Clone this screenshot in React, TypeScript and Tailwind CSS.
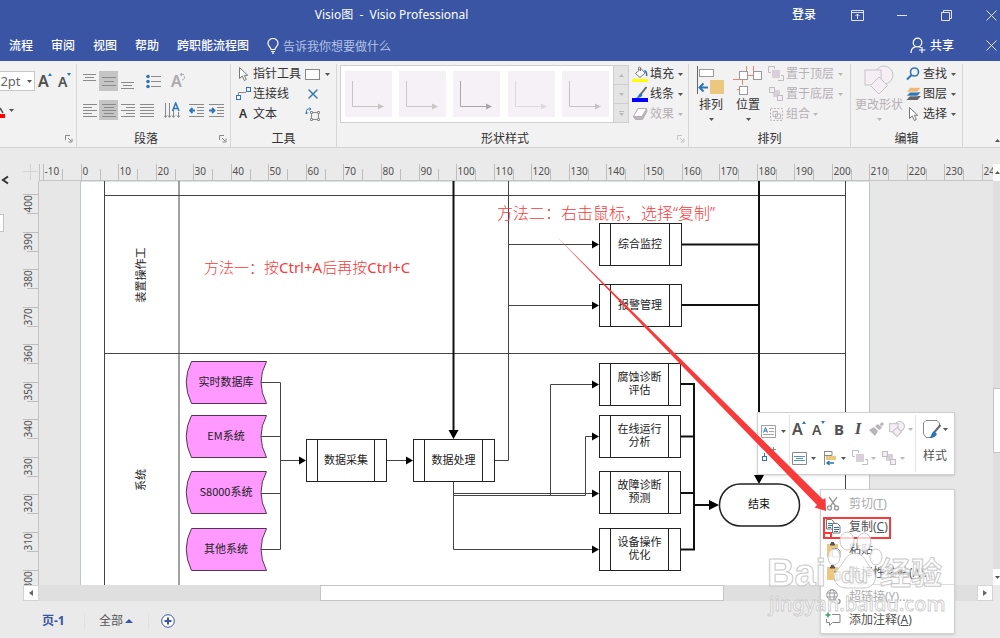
import type { ReactNode } from "react";
import { LuX } from "react-icons/lu";

const GREY = "#8a8a8a";
const BLUE = "#2e75b6";

/* ---------- small shared pieces ---------- */

function Caret({ light = false, up = false }: { light?: boolean; up?: boolean }) {
  return (
    <svg width="5" height="3" viewBox="0 0 5 3" className="shrink-0" fill={light ? "#b9b9b9" : "#555"}>
      <path d={up ? "M0 3h5L2.500 0z" : "M0 0h5L2.500 3z"} />
    </svg>
  );
}

// Each row is [x, width]
function Lines({ rows, gap = 4, color = GREY }: { rows: number[][]; gap?: number; color?: string }) {
  const height = (rows.length - 1) * gap + 1;
  return (
    <svg width="14" height={height} viewBox={`0 0 14 ${height}`} fill={color} shapeRendering="crispEdges">
      {rows.map(([x, w], i) => (
        <rect key={i} x={x} y={i * gap} width={w} height="1" />
      ))}
    </svg>
  );
}

function FontSize({ grow }: { grow?: boolean }) {
  return (
    <svg width="15" height="18" viewBox="0 0 15 18" className="overflow-visible">
      <text x="0" y="15" fontSize={grow ? 16 : 14} className="font-[Noto_Sans] font-semibold" fill="#505050">
        A
      </text>
      <path d={grow ? "M10 4h4l-2-3z" : "M9 1h4l-2 3z"} fill={BLUE} />
    </svg>
  );
}

function Pointer() {
  return (
    <svg width="14" height="16" viewBox="0 0 14 16" fill="#fff" stroke="#777">
      <path d="M3.500 1.500v11l2.800-2.500 2 4.500 2-1-2-4.200h3.400z" />
    </svg>
  );
}

function Front({ back = false }: { back?: boolean }) {
  const line = "#c4bcc4";
  return back ? (
    <svg width="16" height="16" viewBox="0 0 16 16" fill="#f3eef3" stroke={line}>
      <rect x="5" y="4" width="7" height="7" fill="#d9d0d9" stroke="none" />
      <rect x="1.500" y="1.500" width="5" height="5" />
      <rect x="9.500" y="9.500" width="5" height="5" />
    </svg>
  ) : (
    <svg width="16" height="16" viewBox="0 0 16 16" fill="none" stroke={line}>
      <path d="M6.500 3V.500h-6v6H3M10 14.500h5.500v-5H13" />
      <rect x="4" y="4" width="8" height="8" fill="#d9d0d9" stroke="none" />
    </svg>
  );
}

function Shapes({ size }: { size: number }) {
  return (
    <svg width={size} height={size} viewBox="0 0 30 30" fill="#f5eff5" stroke="#c8c2c8" strokeWidth={size > 20 ? 1 : 2}>
      <circle cx="20" cy="10" r="9" />
      <rect x="1" y="5" width="16" height="15" />
      <path d="M15 12l8.500 8.500-8.500 8.500-8.500-8.500z" />
    </svg>
  );
}

function Launcher({ light }: { light?: boolean }) {
  return (
    <button aria-label="更多选项" className="flex w-[15px] justify-center">
      <svg width="8" height="8" viewBox="0 0 8 8" fill="none" stroke={light ? "#c2c2c2" : "#888"}>
        <path d="M.500 5V.500H5M3 3l3 3M7 3.500V7H3.500" />
      </svg>
    </button>
  );
}

function Group({
  label,
  launcher,
  light,
  className,
  children,
}: {
  label?: string;
  launcher?: boolean;
  light?: boolean;
  className: string;
  children: ReactNode;
}) {
  return (
    <section className={`mt-[3px] flex shrink-0 flex-col border-r border-[#d6d6d6] ${className}`}>
      <div className="flex h-[66px]">{children}</div>
      <div className="flex h-[17px] items-center">
        <span className="flex-1 text-center">{label}</span>
        {launcher && <Launcher light={light} />}
      </div>
    </section>
  );
}

function Tool({ icon, label, off, caret = true, wide }: { icon: ReactNode; label: string; off?: boolean; caret?: boolean; wide?: boolean }) {
  return (
    <button className={`flex h-5 items-center gap-[2px] whitespace-nowrap ${off ? "text-[#b5b0b5]" : ""}`}>
      <span className="flex w-4 justify-center">{icon}</span>
      <span>{label}</span>
      {caret && (
        <span className={wide ? "ml-[2px]" : "ml-[1px]"}>
          <Caret light={off} />
        </span>
      )}
    </button>
  );
}

function BigTool({ icon, label, off, className }: { icon: ReactNode; label: string; off?: boolean; className: string }) {
  return (
    <button className={`flex flex-col items-center pt-[1px] ${off ? "text-[#b5b0b5]" : ""} ${className}`}>
      {icon}
      <span className="h-5 leading-5">{label}</span>
      <span className="mt-[3px]">
        <Caret light={off} />
      </span>
    </button>
  );
}

const Bar = () => <span className="h-[18px] w-px bg-[#d6d6d6]" />;

/* ---------- title bar and tabs ---------- */

function Header() {
  return (
    <header className="bg-[#3955a3] text-white">
      <div className="flex h-[30px] items-center">
        <h1 className="flex-1 text-center whitespace-pre">Visio图  -  Visio Professional</h1>
        <div className="flex w-[217px] items-center pl-[9px]">
          <button className="w-[43px] text-left font-medium">登录</button>
          <button aria-label="功能区显示选项" className="flex w-[45px] justify-center">
            <svg width="13" height="11" viewBox="0 0 13 11" fill="none" stroke="#fff" strokeOpacity=".85">
              <path d="M.500.500h12v10H.500zM.500 2.500h12M6.500 9V4M4.500 6l2-2 2 2" />
            </svg>
          </button>
          <button aria-label="最小化" className="flex w-[44px] justify-center">
            <svg width="10" height="10" viewBox="0 0 10 10" stroke="#fff" strokeOpacity=".85">
              <path d="M0 5.500h10" />
            </svg>
          </button>
          <button aria-label="还原" className="flex w-[45px] justify-center">
            <svg width="11" height="11" viewBox="0 0 11 11" fill="none" stroke="#fff" strokeOpacity=".85">
              <path d="M.500 2.500h8v8h-8zM2.500 2.500v-2h8v8h-2" />
            </svg>
          </button>
          <button aria-label="关闭" className="flex flex-1 justify-end pr-[3px]">
            <svg width="11" height="11" viewBox="0 0 11 11" stroke="#fff" strokeOpacity=".85">
              <path d="M.500.500l10 10M10.500.500l-10 10" />
            </svg>
          </button>
        </div>
      </div>
      <nav className="flex h-[31px] items-center gap-[18px] pl-[9px]">
        {["流程", "审阅", "视图", "帮助", "跨职能流程图"].map((tab) => (
          <button key={tab} className="shrink-0 font-medium">
            {tab}
          </button>
        ))}
        <label className="flex flex-1 items-center gap-1">
          <svg width="12" height="16" viewBox="0 0 12 16" fill="none" stroke="#fff" strokeWidth="1.200">
            <path d="M4 11.500C4 9 1 8.500 1 5.300a5 4.800 0 0 1 10 0C11 8.500 8 9 8 11.500zM4 13.500h4M5 15.200h2" />
          </svg>
          <input
            aria-label="告诉我你想要做什么"
            placeholder="告诉我你想要做什么"
            className="w-36 bg-transparent pt-[2px] outline-none placeholder:text-[#b4c1e4]"
          />
        </label>
        <button className="flex items-center gap-1 font-medium">
          <svg width="16" height="17" viewBox="0 0 16 17" fill="none" stroke="#fff" strokeWidth="1.200">
            <circle cx="7.500" cy="5.500" r="4.300" />
            <path d="M1 16c0-3.500 2-5.800 5-6.300M8.500 9.700c1 .2 1.800.600 2.300 1M12 10v6M9 13h6.500" />
          </svg>
          共享
        </button>
        <button aria-label="关闭文档" className="ml-[14px] w-[14px] shrink-0">
          <svg width="11" height="11" viewBox="0 0 11 11" stroke="#fff" strokeOpacity=".85">
            <path d="M.500.500l10 10M10.500.500l-10 10" />
          </svg>
        </button>
      </nav>
    </header>
  );
}

/* ---------- ribbon ---------- */

function FontGroup() {
  return (
    <Group launcher className="w-[77px]">
      <div className="flex flex-col gap-[9px] pt-[7px]">
        <div className="flex h-5 items-center">
          <label className="relative -ml-5 flex items-center">
            <select aria-label="字号" className="h-5 w-[55px] appearance-none border border-[#c8c8c8] bg-white pl-3 text-[13px] text-[#666]">
              <option>12pt</option>
            </select>
            <span className="pointer-events-none absolute right-[3px]">
              <Caret />
            </span>
          </label>
          <button aria-label="增大字号" className="ml-[3px]">
            <FontSize grow />
          </button>
          <button aria-label="减小字号" className="ml-[5px]">
            <FontSize />
          </button>
        </div>
        <button aria-label="字体颜色" className="flex h-5 items-center gap-1">
          <svg width="5" height="16" viewBox="0 0 5 16">
            <path d="M0 6l3 5" stroke="#555" strokeWidth="1.500" />
            <path d="M0 12h5v4H0z" fill="#f00" />
          </svg>
          <Caret />
        </button>
      </div>
    </Group>
  );
}

function ParagraphGroup() {
  const cell = "flex h-5 w-[19px] shrink-0 items-center justify-center";
  return (
    <Group label="段落" launcher className="w-[154px]">
      <div className="flex flex-col gap-[9px] pt-[7px] pl-[3px]">
        <div className="flex h-5 items-center">
          <button aria-label="顶端对齐" className={`${cell} pb-2`}>
            <Lines rows={[[0, 13], [2, 9], [0, 13]]} gap={3} />
          </button>
          <button aria-label="中部对齐" aria-pressed="true" className={`${cell} bg-[#c5c5c5]`}>
            <Lines rows={[[0, 14], [2, 10], [0, 14]]} />
          </button>
          <button aria-label="底端对齐" className={`${cell} pt-2`}>
            <Lines rows={[[0, 13], [2, 9], [0, 13]]} gap={3} />
          </button>
          <span className="ml-1">
            <Bar />
          </span>
          <button aria-label="项目符号" className="ml-[5px]">
            <svg width="16" height="15" viewBox="0 0 16 15" fill={BLUE} stroke={GREY}>
              <path d="M5 2.500h10M5 7.500h10M5 12.500h10" />
              <g stroke="none">
                <circle cx="2" cy="2.500" r="1.800" />
                <circle cx="2" cy="7.500" r="1.800" />
                <circle cx="2" cy="12.500" r="1.800" />
              </g>
            </svg>
          </button>
          <span className="ml-1">
            <Bar />
          </span>
          <button aria-label="旋转文本" className="ml-[5px]">
            <svg width="16" height="16" viewBox="0 0 16 16" className="overflow-visible">
              <text x="0" y="14" fontSize="16" fill="#aaa" className="font-[Noto_Sans] font-semibold">
                A
              </text>
              <path d="M9 1.500h4M9 1.500l2-1.500M9 1.500l2 1.500M13 3a2.500 2.500 0 0 1-2 4" fill="none" stroke="#aaa" />
            </svg>
          </button>
        </div>
        <div className="flex h-5 items-center">
          <button aria-label="左对齐" className={cell}>
            <Lines rows={[[0, 14], [0, 9], [0, 14], [0, 9], [0, 14]]} gap={3} />
          </button>
          <button aria-label="居中" aria-pressed="true" className={`${cell} bg-[#c5c5c5]`}>
            <Lines rows={[[0, 14], [2, 10], [0, 14], [2, 10], [0, 14]]} gap={3} />
          </button>
          <button aria-label="右对齐" className={cell}>
            <Lines rows={[[0, 14], [5, 9], [0, 14], [5, 9], [0, 14]]} gap={3} />
          </button>
          <button aria-label="两端对齐" className={cell}>
            <Lines rows={[[0, 14], [0, 14], [0, 14], [0, 14], [0, 14]]} gap={3} />
          </button>
          <span className="ml-1">
            <Bar />
          </span>
          <button aria-label="文字方向" className="ml-1">
            <svg width="17" height="17" viewBox="0 0 17 17" fill="none" stroke={GREY}>
              <path d="M1.500 1v14M5.500 1v14M9.500 8v7M14.500 10v5M0 13.500l1.500 2 1.500-2M4 13.500l1.500 2 1.500-2M8 13.500l1.500 2 1.500-2M13 13.500l1.500 2 1.500-2" />
              <path d="M8.500 9l3.200-8 3.300 8M9.800 6.500h4" stroke={BLUE} strokeWidth="1.500" />
            </svg>
          </button>
          <span className="ml-[3px]">
            <Bar />
          </span>
          {["减少缩进量", "增加缩进量"].map((name, i) => (
            <button key={name} aria-label={name} className="ml-[5px]">
              <svg width="15" height="15" viewBox="0 0 15 15" fill="none" stroke={GREY}>
                <path d="M0 1.500h15M8 4.500h7M8 7.500h7M8 10.500h7M0 13.500h15" />
                <path d={i === 0 ? "M6 7.500H1M3.500 5L1 7.500 3.500 10" : "M0 7.500h5M3 5l2.500 2.500L3 10"} stroke={BLUE} strokeWidth="1.800" />
              </svg>
            </button>
          ))}
        </div>
      </div>
    </Group>
  );
}

function ToolsGroup() {
  return (
    <Group label="工具" className="w-[106px]">
      <div className="flex w-[74px] flex-col pl-1">
        <Tool icon={<Pointer />} label="指针工具" caret={false} />
        <Tool
          icon={
            <svg width="15" height="14" viewBox="0 0 15 14" fill="none" stroke={BLUE}>
              <path d="M2.500 8V5.500h7.500" stroke={GREY} />
              <rect x=".5" y="8.500" width="4" height="4" />
              <rect x="10.500" y=".5" width="4" height="4" />
            </svg>
          }
          label="连接线"
          caret={false}
        />
        <Tool icon={<span className="font-[Noto_Sans] font-semibold">A</span>} label="文本" caret={false} />
      </div>
      <div className="flex flex-col items-start">
        <button aria-label="矩形" className="flex h-5 items-center gap-[5px]">
          <span className="h-[11px] w-[15px] border border-[#888] bg-white" />
          <Caret />
        </button>
        <button aria-label="连接点" className="flex h-5 w-4 items-center justify-center">
          <LuX size={16} color={BLUE} />
        </button>
        <button aria-label="文本块" className="flex h-5 items-center">
          <svg width="16" height="15" viewBox="0 0 16 15" fill="none" stroke={GREY}>
            <path d="M6.500 5.500h7v7h-7z" />
            <path d="M5.500 4.500h2v2h-2zM12.500 4.500h2v2h-2zM5.500 11.500h2v2h-2zM12.500 11.500h2v2h-2z" fill="#fff" />
            <path d="M1.500 7V3.500A2 2 0 0 1 3 2h3M0 5.500L1.500 7 3 5.500M4.500.500L6 2 4.500 3.500" stroke={BLUE} />
          </svg>
        </button>
      </div>
    </Group>
  );
}

function StylesGroup() {
  const strokes = ["#c6c2c6", "#cac6ca", "#a9a5a9", "#dcd8dc", "#c6c2c6"];
  return (
    <Group label="形状样式" launcher light className="w-[352px]">
      <div className="mt-[1px] ml-[3px] flex h-[58px] w-[289px] border border-[#cfcfcf] bg-white">
        <div className="flex flex-1 items-center justify-around">
          {strokes.map((stroke, i) => (
            <button key={i} aria-label={`样式 ${i + 1}`} className="bg-[#f6f1f7]">
              <svg width="47" height="46" viewBox="0 0 47 46" fill="none" stroke={stroke}>
                <path d="M7.500 10v25.500H34" />
                <path d="M33 32.500v6l6-3z" fill={stroke} stroke="none" />
              </svg>
            </button>
          ))}
        </div>
        <div className="flex w-[15px] flex-col divide-y divide-[#cfcfcf] border-l border-[#cfcfcf] bg-[#e4e4e4]">
          <button aria-label="上一行" className="flex flex-1 items-center justify-center">
            <Caret light up />
          </button>
          <button aria-label="下一行" className="flex flex-1 items-center justify-center">
            <Caret light />
          </button>
          <button aria-label="其他" className="flex flex-1 flex-col items-center justify-center gap-[1px]">
            <span className="h-px w-[5px] bg-[#b9b9b9]" />
            <Caret light />
          </button>
        </div>
      </div>
      <div className="ml-[3px] flex flex-col">
        <Tool
          wide
          icon={
            <svg width="16" height="16" viewBox="0 0 16 16" fill="#fff" stroke="#777">
              <path d="M3.500 7.500L9 2.500l4 4.500-5 4.500z" />
              <path d="M8.500 5V1.500a1.500 1.500 0 0 0-2 0V4" fill="none" />
              <path d="M12.500 4.500c2 1 2.500 3 2 5.500" fill="none" stroke={BLUE} strokeWidth="1.500" />
              <path d="M0 13h16v3H0z" fill="#ff0" stroke="none" />
            </svg>
          }
          label="填充"
        />
        <Tool
          wide
          icon={
            <svg width="16" height="16" viewBox="0 0 16 16">
              <path d="M14.500 1L8.500 8.500" stroke="#666" strokeWidth="2" />
              <path d="M8.500 7l2 2c-1 2.500-3 3-6.500 2.500C6.500 11 6.500 8 8.500 7z" fill={BLUE} />
              <path d="M0 12h16v4H0z" fill="#00f" />
            </svg>
          }
          label="线条"
        />
        <Tool
          wide
          off
          icon={
            <svg width="16" height="14" viewBox="0 0 16 14" stroke="#b5b0b5">
              <path d="M1.500 10L6 1.500h8.500L15 4l-4.500 8.500h-7z" fill="#bdb8bd" />
              <path d="M6 1.500h8.500l-4.500 8H1.500z" fill="#fff" />
            </svg>
          }
          label="效果"
        />
      </div>
    </Group>
  );
}

function ArrangeGroup() {
  return (
    <Group label="排列" className="w-[162px]">
      <BigTool
        className="ml-2 w-7"
        label="排列"
        icon={
          <svg width="28" height="30" viewBox="0 0 28 30" fill="none">
            <path d="M.500 1v28" stroke="#666" />
            <rect x="2.500" y="4.500" width="14" height="7" fill="#fff" stroke="#999" />
            <rect x="13" y="15" width="14" height="14" fill="#ecc77f" />
            <path d="M11 22.500H3M6.500 18.500l-4 4 4 4" stroke={BLUE} strokeWidth="2" />
          </svg>
        }
      />
      <BigTool
        className="ml-2 w-[30px]"
        label="位置"
        icon={
          <svg width="30" height="30" viewBox="0 0 30 30" fill="#fff" stroke="#999">
            <path d="M13.500 1v5M20.500 1v10M15 10.500h6M0 14.500h9.500M9.500 15v5M4 24.500h2" stroke="#e8836f" />
            <rect x="6.500" y="6.500" width="8" height="8" />
            <rect x="20.500" y="6.500" width="8" height="8" />
            <rect x="6.500" y="21.500" width="8" height="8" />
          </svg>
        }
      />
      <div className="ml-[5px] flex flex-col">
        <Tool off wide icon={<Front />} label="置于顶层" />
        <Tool off wide icon={<Front back />} label="置于底层" />
        <Tool
          off
          icon={
            <svg width="15" height="15" viewBox="0 0 15 15" fill="none" stroke="#bdb6bd">
              <path d="M1.500 1.500h12v12h-12z" strokeDasharray="2 1.500" />
              <path d="M4 4.500h4.500v5H4zM6.500 7h5v4.500h-5z" />
            </svg>
          }
          label="组合"
        />
      </div>
    </Group>
  );
}

function EditGroup() {
  return (
    <Group label="编辑" className="w-[112px]">
      <BigTool off className="ml-1 w-12 whitespace-nowrap" label="更改形状" icon={<Shapes size={30} />} />
      <div className="ml-[2px] flex flex-col">
        <Tool
          wide
          icon={
            <svg width="14" height="14" viewBox="0 0 14 14" fill="none" stroke={BLUE} strokeWidth="1.600">
              <circle cx="8.500" cy="5" r="4" />
              <path d="M5.500 8L1 12.500" strokeWidth="2" />
            </svg>
          }
          label="查找"
        />
        <Tool
          wide
          icon={
            <svg width="15" height="14" viewBox="0 0 15 14">
              <path d="M4 9h11l-3.500 4H.500z" fill="#666" />
              <path d="M4 5h11l-3.500 4H.500z" fill={BLUE} stroke="#f2f2f2" strokeWidth=".6" />
              <path d="M4 .500h11L11.500 5H.500z" fill="#ecb976" stroke="#f2f2f2" strokeWidth=".6" />
            </svg>
          }
          label="图层"
        />
        <Tool wide icon={<Pointer />} label="选择" />
      </div>
    </Group>
  );
}

/* ---------- rulers ---------- */

const STEP = 37.56;

function TopRuler() {
  return (
    <svg className="h-[17px] w-full" fontSize="10" fill="#505050">
      {Array.from({ length: 26 }, (_, i) => {
        const x = Math.round(4 + i * STEP) + 0.5;
        return (
          <g key={i} className="font-[Noto_Sans]">
            <path d={`M${x} 0v17M${x + 19} 5v12`} stroke="#bdbdbd" />
            <text x={x + 1} y="11">
              {i * 10 - 10}
            </text>
          </g>
        );
      })}
      <path d="M0 16.500h2000M.500 0v17" stroke="#c4c4c4" />
    </svg>
  );
}

function SideRuler() {
  return (
    <svg className="h-full w-4" fontSize="10" fill="#505050">
      {Array.from({ length: 11 }, (_, i) => {
        const y = Math.round(13 + i * STEP) + 0.5;
        return (
          <g key={i} className="font-[Noto_Sans]">
            <path d={`M0 ${y}h16M4 ${y + 19}h12`} stroke="#bdbdbd" />
            <text transform={`translate(9 ${y + 18}) rotate(-90)`}>{400 - i * 10}</text>
          </g>
        );
      })}
      <path d="M15.500 0v2000" stroke="#c4c4c4" />
    </svg>
  );
}

/* ---------- diagram ---------- */

interface Process {
  x: number;
  y: number;
  w: number;
  text: string[];
}

const processes: Process[] = [
  { x: 599, y: 223, w: 82, text: ["综合监控"] },
  { x: 599, y: 284, w: 82, text: ["报警管理"] },
  { x: 306, y: 439, w: 80, text: ["数据采集"] },
  { x: 413, y: 439, w: 81, text: ["数据处理"] },
  { x: 599, y: 363, w: 81, text: ["腐蚀诊断", "评估"] },
  { x: 599, y: 415, w: 81, text: ["在线运行", "分析"] },
  { x: 599, y: 471, w: 81, text: ["故障诊断", "预测"] },
  { x: 599, y: 528, w: 81, text: ["设备操作", "优化"] },
];

const stores = [
  { y: 361, text: "实时数据库" },
  { y: 415, text: "EM系统" },
  { y: 471, text: "S8000系统" },
  { y: 528, text: "其他系统" },
];

const arrowHeads = [
  [599, 244],
  [599, 305],
  [306, 460],
  [413, 460],
  [599, 384],
  [599, 436],
  [599, 493],
  [599, 549],
];

function Diagram() {
  return (
    <svg
      width="954"
      height="405"
      viewBox="39 181 954 405"
      fill="none"
      fontSize="11"
      className="block font-['Noto_Sans_CJK_SC',sans-serif]"
    >
      <path d="M80.500 181h789v410h-789z" fill="#fff" stroke="#bcc4cc" />

      {/* swimlanes */}
      <path d="M104.500 181v410M179 181v410M845.500 181v410M104 195.500h742M104 353.500h742" stroke="#444" />
      <g fill="#222" textAnchor="middle">
        <text transform="translate(145 275) rotate(-90)">装置操作工</text>
        <text transform="translate(145 480) rotate(-90)">系统</text>
      </g>

      {/* thin connectors */}
      <path
        stroke="#444"
        d="M508.500 181v279.500H494M508.500 244.500H592M508.500 305.500H592M261 382.500h19.500v167H261M261 436.500h19.500M261 493.500h19.500M280.500 460.500H300M386 460.500h20M453.500 481v68.500H592M453.500 493.500H592M453.500 495.500h132v-59h6.500M550.500 495V384.500H592"
      />
      {/* heavy connectors */}
      <path
        stroke="#111"
        strokeWidth="2"
        d="M453.500 181v250M759 181v297M681 244.500h78M681 305h78M680 384h14v165.500h-14M680 436.500h14M680 493h14M694 505h18"
      />
      <g fill="#000">
        {arrowHeads.map(([x, y], i) => (
          <path key={i} d={`M${x} ${y + 0.5}l-7-4v8z`} />
        ))}
        <path d="M453.500 439l-5-9h10zM759 484l-5-9h10zM719 505l-10-5v10z" />
      </g>

      {stores.map(({ y, text }) => (
        <g key={text}>
          <path
            d={`M191.500 ${y + 0.5}H266.500Q255.500 ${y + 21} 266.500 ${y + 42.5}H191.500Q181 ${y + 21} 191.500 ${y + 0.5}z`}
            fill="#ff99ff"
            stroke="#553355"
          />
          <text x="226" y={y + 25} textAnchor="middle" fill="#222">
            {text}
          </text>
        </g>
      ))}

      {processes.map(({ x, y, w, text }) => (
        <g key={text[0]}>
          <rect x={x + 0.5} y={y + 0.5} width={w} height="42" fill="#fff" stroke="#222" />
          <path d={`M${x + 11.5} ${y}v42M${x + w - 11.5} ${y}v42`} stroke="#222" />
          {text.map((line, i) => (
            <text key={line} x={x + w / 2} y={y + (text.length === 1 ? 25 : 18) + i * 13} textAnchor="middle" fill="#222">
              {line}
            </text>
          ))}
        </g>
      ))}

      <rect x="719.500" y="484" width="80" height="42" rx="21" fill="#fff" stroke="#222" strokeWidth="1.500" />
      <text x="759" y="508" textAnchor="middle" fill="#111">
        结束
      </text>

      <g fill="#f83a3a" className="font-['Noto_Sans','Noto_Sans_CJK_SC',sans-serif] font-light">
        <text x="204" y="273" fontSize="15">
          方法一：按<tspan className="font-normal">Ctrl+A</tspan>后再按<tspan className="font-normal">Ctrl+C</tspan>
        </text>
        <text x="497" y="219" fontSize="16">
          方法二：右击鼠标，选择“复制”
        </text>
      </g>
    </svg>
  );
}

/* ---------- floating toolbar, context menu, annotations ---------- */

function MiniToolbar() {
  const row = "flex items-center";
  return (
    <div className="absolute top-[412px] left-[757px] flex h-[63px] w-[198px] border border-[#d0d0d0] bg-white py-[2px] shadow-sm">
      <div className="flex w-8 flex-col gap-[9px] border-r border-[#e4e4e4] pt-[10px] pl-[3px]">
        <button aria-label="文本块" className="flex items-center gap-[5px]">
          <svg width="15" height="13" viewBox="0 0 15 13" fill="none" stroke={GREY}>
            <path d="M.500.500h14v12H.500zM8 3.500h5M8 6.500h5M2 9.500h11" strokeWidth=".8" />
            <path d="M2.500 7.500L4.500 2.500l2 5M3 6h3" stroke={BLUE} />
          </svg>
          <Caret />
        </button>
        <button aria-label="连接线">
          <svg width="16" height="16" viewBox="0 0 16 16" fill="none" stroke={BLUE}>
            <rect x="1.500" y="9.500" width="4" height="4" />
            <path d="M3.500 9V6" />
            <path d="M12.500 0v6M10 2.500h5" stroke={GREY} />
          </svg>
        </button>
      </div>
      <div className="flex flex-1 flex-col gap-[9px] border-r border-[#e4e4e4] pt-1 pl-[2px]">
        <div className={`${row} h-5 text-[#505050]`}>
          <button aria-label="增大字号" className="w-5">
            <FontSize grow />
          </button>
          <button aria-label="减小字号" className="w-[19px]">
            <FontSize />
          </button>
          <button aria-label="加粗" className="w-4 font-[Noto_Sans] text-[15px] font-bold">
            B
          </button>
          <button aria-label="倾斜" className="w-[22px] font-[Liberation_Serif] text-[17px] font-bold italic">
            I
          </button>
          <button aria-label="格式刷" className="w-5">
            <svg width="15" height="14" viewBox="0 0 15 14" fill="#b8b4b8">
              <path d="M11 2l2-2 2 2-3 3zM6 4l3-2 4 4-3 2zM0 8l5-3 4 4-3 5z" />
            </svg>
          </button>
          <button aria-label="更改形状" className={`${row} gap-[3px]`}>
            <Shapes size={16} />
            <Caret light />
          </button>
        </div>
        <div className={`${row} h-5`}>
          <button aria-label="对齐文本" className={`${row} w-8 gap-1`}>
            <svg width="15" height="13" viewBox="0 0 15 13" fill="none" stroke={GREY}>
              <path d="M.500.500h14v12H.500z" />
              <path d="M2 4.500h11M4 6.500h7M2 8.500h11" stroke={BLUE} strokeWidth=".8" />
            </svg>
            <Caret />
          </button>
          <button aria-label="排列" className={`${row} w-[28px] gap-1`}>
            <svg width="13" height="16" viewBox="0 0 13 16" fill="none" stroke={GREY}>
              <path d="M.500 1v14M1 1.500h7v4H1" />
              <path d="M2 6h10v4H2z" fill="#ecc77f" stroke="none" />
              <path d="M10 13h-7M5.500 11L3 13l2.500 2" stroke={BLUE} strokeWidth="1.500" />
            </svg>
            <Caret />
          </button>
          <button aria-label="置于顶层" className={`${row} w-[29px] gap-[3px]`}>
            <Front />
            <Caret light />
          </button>
          <button aria-label="置于底层" className={`${row} gap-[3px]`}>
            <Front back />
            <Caret light />
          </button>
        </div>
      </div>
      <button className="flex w-[38px] flex-col items-center gap-2 pt-1 text-[#555]">
        <span className="flex items-center gap-[1px]">
          <svg width="20" height="21" viewBox="0 0 20 21" fill="none" stroke={GREY}>
            <path d="M9 18.500H4L1.500 15V4L4 1.500h11L17.500 4v4" />
            <path d="M18.500 6l-6 7" stroke="#666" strokeWidth="2" />
            <path d="M12 12l3 3c-2 4-5 4-8 4 3-2 2-5 5-7z" fill={BLUE} stroke="none" />
          </svg>
          <Caret />
        </span>
        样式
      </button>
    </div>
  );
}

function MenuItem({ icon, off, children }: { icon: ReactNode; off?: boolean; children: ReactNode }) {
  return (
    <button
      role="menuitem"
      className={`flex h-[23px] items-center gap-2 pl-1 whitespace-nowrap ${off ? "text-[#aaa]" : "text-[#505050]"}`}
    >
      <span className="flex w-4 justify-center">{icon}</span>
      <span>{children}</span>
    </button>
  );
}

function PasteIcon({ special }: { special?: boolean }) {
  return (
    <svg width="15" height="16" viewBox="0 0 15 16">
      <path d="M1 2h11v13H1z" fill="#ecc77f" />
      <path d="M4 2.500h5M5 1h3" stroke="#555" strokeWidth="2" />
      {special ? (
        <path d="M8 7h6v8H8M11 9v6" fill="#fff" stroke="#666" />
      ) : (
        <path d="M6.500 6.500h5l2.500 2.500v6H6.500z" fill="#fff" stroke="#999" />
      )}
    </svg>
  );
}

function ContextMenu() {
  return (
    <div
      role="menu"
      className="absolute top-[489px] left-[820px] flex w-[135px] flex-col border border-[#d0d0d0] bg-white py-[2px] shadow-sm"
    >
      <MenuItem
        off
        icon={
          <svg width="14" height="15" viewBox="0 0 14 15" fill="none" stroke="#999" strokeWidth="1.300">
            <path d="M3 1l6.500 9M11 1L4.500 10" />
            <circle cx="3.500" cy="12" r="2" />
            <circle cx="10.500" cy="12" r="2" />
          </svg>
        }
      >
        剪切(<u>T</u>)
      </MenuItem>
      <div className="relative flex flex-col">
        <MenuItem
          icon={
            <svg width="15" height="15" viewBox="0 0 15 15" fill="#fff" stroke="#777">
              <path d="M.500.500h5l2.500 2.500v7H.500z" />
              <path d="M2 4.500h4M2 6.500h4M2 8.500h3" stroke={BLUE} />
              <path d="M6.500 4.500h5l2.500 2.500v7H6.500z" />
              <path d="M8 8.500h5M8 10.500h5M8 12.500h4" stroke={BLUE} />
            </svg>
          }
        >
          复制(<u>C</u>)
        </MenuItem>
        <span className="pointer-events-none absolute top-[2px] left-[2px] flex h-[22px] w-[68px] items-end border-2 border-[#f83a3a]">
          <span className="h-[5px] w-[7px] border-t-2 border-r-2 border-[#f83a3a] bg-white" />
        </span>
      </div>
      <MenuItem icon={<PasteIcon />}>粘贴</MenuItem>
      <MenuItem icon={<PasteIcon special />}>
        选择性粘贴(<u>A</u>)...
      </MenuItem>
      <hr className="ml-7 border-[#dcdcdc]" />
      <MenuItem
        off
        icon={
          <svg width="15" height="15" viewBox="0 0 15 15" fill="none" stroke="#999">
            <circle cx="6" cy="6" r="5.300" />
            <ellipse cx="6" cy="6" rx="2.300" ry="5.300" />
            <path d="M1 4h10M1 8h10" />
            <path d="M7 12.500a1.800 1.800 0 0 1 2-2h1M10 14.500h2a2 2 0 0 0 0-4" strokeWidth="1.500" />
          </svg>
        }
      >
        超链接(<u>Y</u>)...
      </MenuItem>
      <MenuItem
        icon={
          <svg width="16" height="15" viewBox="0 0 16 15" fill="none" stroke="#888">
            <path d="M7 2.500h8v8H7.500L4.500 13.500v-3h-3V7" />
            <path d="M3 .500v5M.500 3h5" stroke="#3f9b6d" strokeWidth="1.500" />
          </svg>
        }
      >
        添加注释(<u>A</u>)
      </MenuItem>
    </div>
  );
}

function RedArrow() {
  return (
    <svg className="pointer-events-none absolute top-[230px] left-[550px]" width="280" height="285" viewBox="550 230 280 285">
      <path d="M556 236L823 499.500 825.500 498 826 511 814.500 507.500 817 505z" fill="#f83a3a" />
    </svg>
  );
}

function Watermark() {
  return (
    <svg
      className="pointer-events-none absolute top-[525px] left-[760px]"
      width="195"
      height="100"
      viewBox="760 525 195 100"
      fill="#fff"
      fillOpacity=".75"
      stroke="#c9c9c9"
      strokeWidth="1"
    >
      <g className="font-['Liberation_Sans','Noto_Sans_CJK_SC',sans-serif] font-bold">
        <text x="767" y="586" fontSize="38">
          Bai
        </text>
        <ellipse cx="847" cy="541" rx="7" ry="9" />
        <ellipse cx="864" cy="542" rx="7" ry="9" />
        <ellipse cx="834" cy="557" rx="6" ry="8" />
        <ellipse cx="876" cy="557" rx="6" ry="8" />
        <path d="M855 553c8 0 11 9 16 15 9 9 3 20-7 20-6 0-12 0-18 0-10 0-16-11-7-20 5-6 8-15 16-15z" />
        <text x="841" y="583" fontSize="22">
          du
        </text>
        <text x="880" y="584" fontSize="31">
          经验
        </text>
      </g>
      <text x="769" y="611" fontSize="20" className="font-['Noto_Sans',sans-serif] font-medium" strokeWidth=".8">
        jingyan.baidu.com
      </text>
    </svg>
  );
}

/* ---------- page ---------- */

export default function App() {
  return (
    <div className="relative flex h-screen flex-col overflow-hidden bg-[#eaeaea] font-['Noto_Sans','Noto_Sans_CJK_SC',sans-serif] text-[12px] leading-4 text-[#333]">
      <Header />

      <div className="flex h-[87px] shrink-0 border-b border-[#d2d2d2] bg-[#f2f2f2]">
        <FontGroup />
        <ParagraphGroup />
        <ToolsGroup />
        <StylesGroup />
        <ArrangeGroup />
        <EditGroup />
        <button aria-label="折叠功能区" className="ml-auto self-end pb-[5px]">
          <Caret up />
        </button>
      </div>

      <main className="flex min-h-0 flex-1 pt-4">
        <aside className="flex w-[23px] shrink-0 flex-col items-start pt-[11px]">
          <button aria-label="展开形状窗格" className="pl-[1px]">
            <svg width="8" height="10" viewBox="0 0 8 10" fill="none" stroke="#333" strokeWidth="2">
              <path d="M7 1.500L2 5l5 3.500" />
            </svg>
          </button>
          <span className="mt-[29px] h-[18px] w-1 border border-l-0 border-[#c4c4c4] bg-white" />
        </aside>

        <div className="flex min-w-0 flex-1 flex-col">
          <div className="flex h-[17px] shrink-0">
            <svg width="16" height="17" viewBox="0 0 16 17" className="shrink-0" stroke="#d4d4d4">
              <path d="M7.500 0v16M0 7.500h15" />
            </svg>
            <TopRuler />
          </div>
          <div className="flex min-h-0 flex-1">
            <SideRuler />
            <div className="min-w-0 flex-1 overflow-hidden bg-[#e7e7e7]">
              <Diagram />
            </div>
          </div>
          <div className="flex h-4 shrink-0 bg-[#dfdfdf]">
            <button aria-label="向左滚动" className="flex w-4 items-center justify-center border border-[#d4d4d4] bg-white">
              <svg width="4" height="6" viewBox="0 0 4 6" fill="#666">
                <path d="M4 0v6L0 3z" />
              </svg>
            </button>
            <div className="flex flex-1">
              <div className="ml-[30%] w-[43%] border border-[#c4c4c4] bg-white" />
            </div>
            <button aria-label="向右滚动" className="flex w-4 items-center justify-center border border-[#d4d4d4] bg-white">
              <svg width="4" height="6" viewBox="0 0 4 6" fill="#666">
                <path d="M0 0v6l4-3z" />
              </svg>
            </button>
          </div>
        </div>

        <div className="mb-4 flex w-[7px] shrink-0 flex-col bg-[#dfdfdf]">
          <button aria-label="向上滚动" className="flex h-[17px] items-center justify-end bg-white">
            <Caret up />
          </button>
          <div className="flex flex-1 flex-col">
            <div className="mt-[207px] h-[65px] border border-r-0 border-[#c4c4c4] bg-white" />
          </div>
          <button aria-label="向下滚动" className="flex h-4 items-center justify-end bg-white">
            <Caret />
          </button>
        </div>
      </main>

      <footer className="flex h-[37px] shrink-0 items-center pt-[2px] pl-[42px] text-[#555]">
        <button className="w-[43px] border-r border-[#e0e0e0] text-left font-bold whitespace-nowrap text-[#3955a3]">页-1</button>
        <button className="flex w-16 items-center gap-[2px] border-r border-[#e0e0e0] pl-[14px]">
          全部
          <svg width="8" height="4" viewBox="0 0 8 4" fill="#3955a3">
            <path d="M0 4h8L4 0z" />
          </svg>
        </button>
        <button aria-label="插入页" className="ml-3">
          <svg width="14" height="14" viewBox="0 0 14 14" fill="none" stroke="#3955a3">
            <circle cx="7" cy="7" r="6.300" fill="#fff" />
            <path d="M7 3.500v7M3.500 7h7" strokeWidth="2" />
          </svg>
        </button>
      </footer>

      <MiniToolbar />
      <ContextMenu />
      <RedArrow />
      <Watermark />
    </div>
  );
}
